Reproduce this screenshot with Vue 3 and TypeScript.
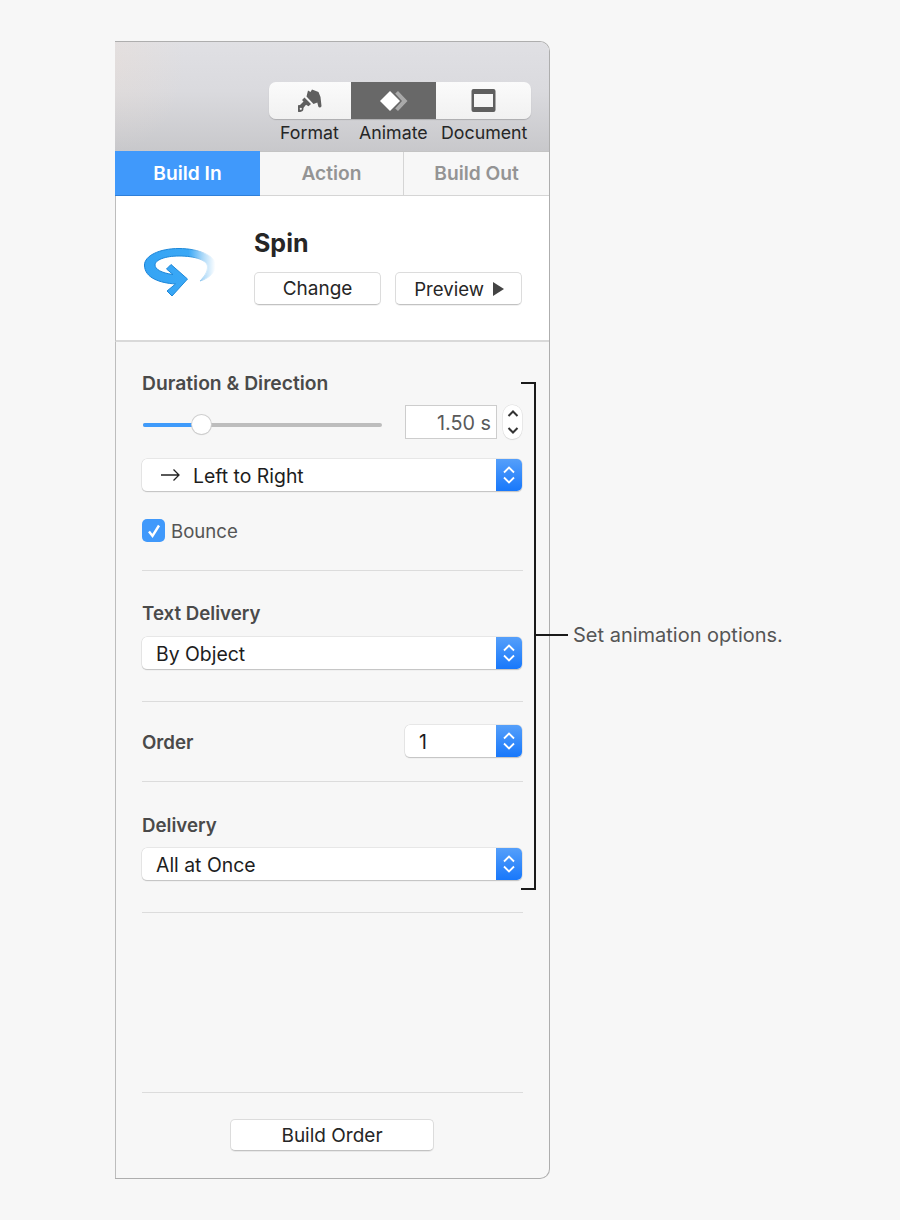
<script setup lang="ts">
const tools = ['Format', 'Animate', 'Document']
const tabs = ['Build In', 'Action', 'Build Out']
</script>

<template>
  <div class="page">
    <div class="panel">
      <header class="top">
        <div class="seg">
          <div class="seg-item seg-format">
            <svg width="24" height="26" viewBox="0 0 24 26">
              <path d="M10 2.500L12.500 4 14 1.500 20.500 4 22.500 9 23.500 18A1.700 1.700 0 0 1 20.300 18.500L19.300 14.500 15.500 16 8.500 8.500Z" fill="#5f5f5f" />
              <path d="M6.500 9.500L13 16 10.500 18.300 8 16.800 5.400 20A3.500 3.500 0 1 1 2 17L5.500 13.500 4 12Z" fill="#5f5f5f" />
              <circle cx="2.800" cy="20.800" r="1.100" fill="#f4f4f4" />
            </svg>
          </div>
          <div class="seg-item seg-animate">
            <svg width="30" height="22" viewBox="0 0 30 22">
              <path d="M19 1l9.500 10-9.500 10-2.800-2.400 6.800-7.600-6.800-7.600z" fill="#a9a9a9" />
              <path d="M11 1l10 10-10 10-10-10z" fill="#fff" />
            </svg>
          </div>
          <div class="seg-item seg-doc">
            <svg width="26" height="25" viewBox="0 0 26 25">
              <path fill-rule="evenodd" d="M3.500 1H23.500A2 2 0 0 1 25.500 3V22A2 2 0 0 1 23.500 24H3.500A2 2 0 0 1 1.500 22V3A2 2 0 0 1 3.500 1ZM4 6V19H23V6Z" fill="#5f5f5f" />
            </svg>
          </div>
        </div>
        <div class="seg-labels">
          <span v-for="t in tools" :key="t" class="seg-label" :class="'l-' + t">{{ t }}</span>
        </div>
      </header>

      <nav class="tabs">
        <div v-for="(t, i) in tabs" :key="t" class="tab" :class="{ active: i === 0 }">{{ t }}</div>
      </nav>

      <section class="effect">
        <svg class="spin" width="76" height="52" viewBox="0 0 76 52">
          <defs>
            <linearGradient id="ring" x1="0" y1="0" x2="1" y2="0">
              <stop offset="0" stop-color="#35a4f4" />
              <stop offset="0.62" stop-color="#3aa8f6" />
              <stop offset="0.84" stop-color="#b5ddf9" />
              <stop offset="1" stop-color="#ffffff" />
            </linearGradient>
            <linearGradient id="ringEdge" x1="0" y1="0" x2="1" y2="0">
              <stop offset="0" stop-color="#1780d6" />
              <stop offset="0.64" stop-color="#1f8ad8" />
              <stop offset="0.86" stop-color="#cfe8fa" />
              <stop offset="1" stop-color="#ffffff" />
            </linearGradient>
          </defs>
          <path d="M27 16.500L43.500 31 28 48 23 43 31.500 36C16 35 0.500 30 0.500 17 0.500 8 15 0.500 35 0.500 55 0.500 71.500 8 71.500 17 71.500 24 66 30 56 33 60 29 63.500 24 63.500 19 63.500 12 51 8 35 8 21 8 11 12 11 17 11 21 17 25 29 26.500L22.500 21Z" fill="url(#ring)" stroke="url(#ringEdge)" stroke-width="1" />
        </svg>
        <div class="effect-body">
          <h1 class="effect-title">Spin</h1>
          <div class="effect-btns">
            <button class="btn">Change</button>
            <button class="btn btn-preview">Preview<span class="play"></span></button>
          </div>
        </div>
      </section>

      <main class="main">
        <div class="group first">
          <div class="heading wide">Duration &amp; Direction</div>
          <div class="slider-row">
            <div class="slider">
              <div class="track"></div>
              <div class="fill"></div>
              <div class="thumb"></div>
            </div>
            <div class="number">1.50 s</div>
            <div class="stepper">
              <svg width="12" height="28" viewBox="0 0 12 28">
                <path d="M1.500 8L6 3.500 10.500 8M1.500 20L6 24.500 10.500 20" fill="none" stroke="#333" stroke-width="2" />
              </svg>
            </div>
          </div>
          <div class="select gap-select">
            <svg class="arrow" width="19" height="14" viewBox="0 0 19 14">
              <path d="M0 7H18M12.500 1.500L18 7 12.500 12.500" fill="none" stroke="#222" stroke-width="1.300" />
            </svg>
            <span class="select-text">Left to Right</span>
            <div class="select-end">
              <svg width="14" height="24" viewBox="0 0 14 24"><path d="M2 9.500L7 4.500 12 9.500M2 14.500L7 19.500 12 14.500" fill="none" stroke="#fff" stroke-width="1.800" /></svg>
            </div>
          </div>
          <label class="check-row">
            <span class="check">
              <svg width="16" height="16" viewBox="0 0 16 16"><path d="M3 8.500L6.500 13 13 2.500" fill="none" stroke="#fff" stroke-width="2.400" /></svg>
            </span>
            <span class="check-label">Bounce</span>
          </label>
        </div>

        <div class="group delivery-1">
          <div class="heading">Text Delivery</div>
          <div class="select gap-head">
            <span class="select-text">By Object</span>
            <div class="select-end">
              <svg width="14" height="24" viewBox="0 0 14 24"><path d="M2 9.500L7 4.500 12 9.500M2 14.500L7 19.500 12 14.500" fill="none" stroke="#fff" stroke-width="1.800" /></svg>
            </div>
          </div>
        </div>

        <div class="group order-row">
          <div class="heading">Order</div>
          <div class="select small">
            <span class="select-text">1</span>
            <div class="select-end">
              <svg width="14" height="24" viewBox="0 0 14 24"><path d="M2 9.500L7 4.500 12 9.500M2 14.500L7 19.500 12 14.500" fill="none" stroke="#fff" stroke-width="1.800" /></svg>
            </div>
          </div>
        </div>

        <div class="group delivery-2">
          <div class="heading">Delivery</div>
          <div class="select gap-head2">
            <span class="select-text">All at Once</span>
            <div class="select-end">
              <svg width="14" height="24" viewBox="0 0 14 24"><path d="M2 9.500L7 4.500 12 9.500M2 14.500L7 19.500 12 14.500" fill="none" stroke="#fff" stroke-width="1.800" /></svg>
            </div>
          </div>
        </div>

        <div class="spacer"></div>

        <div class="footer">
          <button class="btn build">Build Order</button>
        </div>
      </main>
    </div>

    <div class="bracket"></div>
    <div class="tick"></div>
    <div class="note">Set animation options.</div>
  </div>
</template>

<style>
html, body { margin: 0; background: #f7f7f7; }
</style>

<style scoped>
.page {
  position: relative;
  width: 900px;
  height: 1220px;
  padding: 41px 0 0 115px;
  box-sizing: border-box;
  background: #f7f7f7;
  font-family: Inter, "Liberation Sans", sans-serif;
  font-size: 19px;
  color: #222;
}
.panel {
  width: 435px;
  height: 1138px;
  box-sizing: border-box;
  display: flex;
  flex-direction: column;
  border: 1px solid #aeaeae;
  border-left: 0;
  border-radius: 0 10px 10px 0;
  overflow: hidden;
}
.top {
  height: 109px;
  box-sizing: border-box;
  padding: 40px 0 0 154px;
  background:
    radial-gradient(ellipse 70px 90px at 0 20px, rgba(240, 222, 208, 0.28), rgba(240, 222, 208, 0)),
    linear-gradient(180deg, #e0e0e4 0%, #dadade 45%, #c8c8cb 100%);
}
.seg {
  display: flex;
  width: 262px;
  height: 37px;
  border-radius: 7px;
  overflow: hidden;
  background: linear-gradient(180deg, #fbfbfb, #f1f1f1);
  box-shadow: 0 1px 1px rgba(0, 0, 0, 0.18);
}
.seg-item {
  display: flex;
  align-items: center;
  justify-content: center;
}
.seg-format { width: 82px; }
.seg-animate { width: 85px; background: #686868; }
.seg-doc { width: 95px; padding-right: 2px; box-sizing: border-box; }
.seg-labels {
  display: flex;
  margin-top: 2px;
  height: 24px;
  font-size: 17.800px;
  line-height: 24px;
  color: #262626;
  white-space: nowrap;
}
.seg-label { display: block; }
.l-Format { margin-left: 11px; width: 79px; }
.l-Animate { width: 82px; }
.tabs {
  display: flex;
  height: 45px;
  box-sizing: border-box;
  background: #f7f7f7;
  border-top: 1px solid #c4c4c4;
  border-bottom: 1px solid #d5d5d5;
}
.tab {
  display: flex;
  align-items: center;
  justify-content: center;
  font-weight: 600;
  font-size: 19.200px;
  line-height: 21px;
  color: #949494;
}
.tab:nth-child(1) { width: 145px; flex: none; }
.tab:nth-child(2) { width: 144px; flex: none; border-right: 1px solid #d5d5d5; box-sizing: border-box; }
.tab:nth-child(3) { flex: 1; }
.tab.active {
  background: #4099fb;
  color: #fff;
  margin: -1px 0;
  box-shadow: inset 0 -1px 0 #2f7fd8;
}
.effect {
  height: 146px;
  box-sizing: border-box;
  padding: 28px 27px 0 28px;
  display: flex;
  background: #fff;
  border-bottom: 2px solid #d9d9d9;
  border-left: 1px solid #bdbdbd;
}
.spin { margin: 24px 0 0 0; flex: none; }
.effect-body { margin-left: 34px; flex: 1; }
.effect-title {
  margin: 0;
  font-size: 25px;
  line-height: 38px;
  font-weight: 700;
  color: #262626;
}
.effect-btns {
  display: flex;
  gap: 14px;
  margin-top: 10px;
}
.btn {
  font: inherit;
  color: #262626;
  background: #fff;
  border: 1px solid #dcdcdc;
  border-bottom-color: #c2c2c2;
  border-radius: 5px;
  height: 33px;
  width: 127px;
  padding: 0;
  display: flex;
  align-items: center;
  justify-content: center;
  box-shadow: 0 1px 0 rgba(0, 0, 0, 0.06);
}
.btn-preview { font-size: 18.600px; padding-left: 1px; }
.play {
  width: 0;
  height: 0;
  margin-left: 9px;
  border-left: 11px solid #444;
  border-top: 7.500px solid transparent;
  border-bottom: 7.500px solid transparent;
}
.main {
  flex: 1;
  display: flex;
  flex-direction: column;
  box-sizing: border-box;
  padding: 0 26px 27px 26px;
  border-left: 1px solid #bdbdbd;
}
.group {
  border-bottom: 1px solid #dcdcdc;
}
.first { padding: 29px 0 28px; }
.delivery-1 { padding: 30px 0 32px; }
.order-row {
  display: flex;
  align-items: center;
  justify-content: space-between;
  padding: 23px 1px 24px 0;
}
.order-row .heading { height: 26px; padding-top: 4px; }
.delivery-2 { padding: 31px 0 32px; }
.heading {
  box-sizing: border-box;
  height: 24px;
  padding-top: 2px;
  font-weight: 600;
  font-size: 18.700px;
  line-height: 22px;
  color: #4a4a4a;
  white-space: nowrap;
}
.heading.wide { font-size: 19.300px; padding-top: 1px; }
.slider-row {
  display: flex;
  align-items: center;
  margin-top: 10px;
  height: 34px;
  margin-right: 1px;
}
.slider {
  position: relative;
  width: 240px;
  height: 34px;
  margin-right: 23px;
  flex: none;
}
.track, .fill {
  position: absolute;
  top: 18px;
  left: 1px;
  height: 4px;
  border-radius: 2px;
}
.track { width: 239px; background: #bdbdbd; }
.fill { width: 58px; background: #3f9bfb; }
.thumb {
  position: absolute;
  left: 50px;
  top: 10px;
  width: 19px;
  height: 19px;
  border-radius: 50%;
  background: #fff;
  box-shadow: 0 0 0 1px #cfcfcf, 0 1px 1px rgba(0, 0, 0, 0.2);
}
.number {
  width: 92px;
  height: 34px;
  box-sizing: border-box;
  border: 1px solid #cdcdcd;
  background: #fff;
  text-align: right;
  padding-right: 5px;
  font-size: 19.800px;
  line-height: 34px;
  color: #5a5a5a;
}
.stepper {
  width: 19px;
  height: 34px;
  margin-left: 6px;
  box-sizing: border-box;
  border-radius: 10px;
  background: #fff;
  box-shadow: 0 0 0 0.5px #dcdcdc, 0 1px 1px rgba(0, 0, 0, 0.12);
  display: flex;
  align-items: center;
  justify-content: center;
}
.select {
  display: flex;
  align-items: center;
  width: 380px;
  height: 32px;
  box-sizing: border-box;
  padding-left: 14px;
  background: #fff;
  border-radius: 5px;
  box-shadow: 0 0 0 0.5px #d8d8d8, 0 1px 1px rgba(0, 0, 0, 0.3);
  overflow: hidden;
  color: #1d1d1d;
  font-size: 19.400px;
  white-space: nowrap;
}
.select-text { padding-top: 2px; }
.select.small { width: 117px; }
.gap-select { margin-top: 20px; padding-left: 19px; }
.gap-head { margin-top: 12px; }
.gap-head2 { margin-top: 11px; }
.arrow { margin-right: 13px; flex: none; }
.select-end {
  margin-left: auto;
  width: 26px;
  height: 100%;
  flex: none;
  display: flex;
  align-items: center;
  justify-content: center;
  background: linear-gradient(180deg, #559ffa, #1878fb);
}
.check-row {
  display: flex;
  align-items: center;
  margin-top: 28px;
  height: 23px;
}
.check {
  width: 23px;
  height: 23px;
  border-radius: 5px;
  background: #4099fb;
  display: flex;
  align-items: center;
  justify-content: center;
}
.check-label { margin-left: 6px; color: #555; font-size: 18.600px; }
.spacer { flex: 1; border-bottom: 1px solid #dcdcdc; }
.footer {
  display: flex;
  justify-content: center;
  padding: 26px 1px 0 0;
}
.btn.build { width: 204px; height: 32px; }
.bracket {
  position: absolute;
  left: 521px;
  top: 382px;
  width: 13px;
  height: 504px;
  border: 2px solid #1a1a1a;
  border-left: 0;
}
.tick {
  position: absolute;
  left: 535px;
  top: 634px;
  width: 33px;
  height: 2px;
  background: #1a1a1a;
}
.note {
  position: absolute;
  left: 573px;
  top: 623px;
  font-size: 20px;
  line-height: 24px;
  color: #555;
  white-space: nowrap;
}
</style>
